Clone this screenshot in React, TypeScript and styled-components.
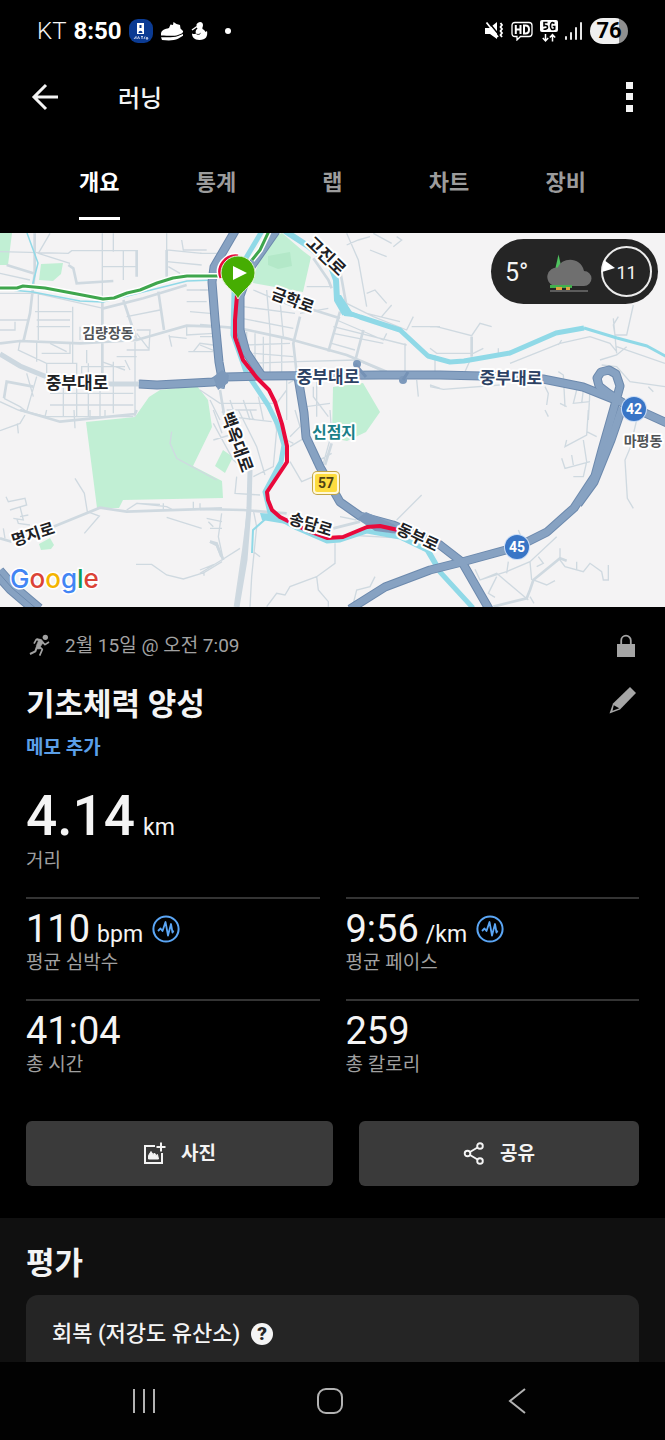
import React from "react";
import styled, { createGlobalStyle } from "styled-components";

const GlobalStyle = createGlobalStyle`
  * { box-sizing: border-box; }
  body {
    margin: 0;
    background: #000;
    color: #f4f4f4;
    font-family: Roboto, "Noto Sans CJK KR", sans-serif;
  }
  button {
    margin: 0;
    padding: 0;
    border: 0;
    background: none;
    color: inherit;
    font: inherit;
    cursor: pointer;
  }
  svg { display: block; flex: none; }
`;

const Screen = styled.div`
  display: flex;
  flex-direction: column;
  min-height: 100vh;
`;

/* ---------- Status bar ---------- */

const StatusBar = styled.div`
  display: flex;
  align-items: center;
  justify-content: space-between;
  height: 62px;
  padding: 0 37px;
`;

const StatusGroup = styled.div<{ $gap: number }>`
  display: flex;
  align-items: center;
  gap: ${(p) => p.$gap}px;
`;

const Carrier = styled.span`
  font-size: 24px;
  line-height: 30px;
  font-weight: 300;
`;

const Clock = styled.time`
  font-size: 24px;
  line-height: 30px;
  font-weight: 700;
  color: #fff;
`;

const Battery = styled.span`
  display: flex;
  align-items: center;
  justify-content: center;
  width: 38px;
  height: 26px;
  border-radius: 13px;
  background: linear-gradient(90deg, #efefef 76%, #8f8f8f 76%);
  color: #000;
  font-size: 22px;
  line-height: 26px;
  font-weight: 700;
`;

/* ---------- App bar and tabs ---------- */

const AppBar = styled.header`
  display: flex;
  align-items: center;
  height: 70px;
  padding: 0 19px 0 28px;
`;

const IconButton = styled.button`
  display: flex;
  align-items: center;
  justify-content: center;
  width: 34px;
  height: 40px;
`;

const AppTitle = styled.h1`
  flex: 1;
  margin: 0 0 0 56px;
  padding-top: 3px;
  font-size: 24px;
  line-height: 36px;
  font-weight: 500;
`;

const Tabs = styled.div`
  display: flex;
  height: 101px;
  padding: 0 41px;
`;

const Tab = styled.button<{ $active?: boolean }>`
  flex: 1;
  display: flex;
  justify-content: center;
  padding-top: 35px;
  font-size: 22px;
  font-weight: 700;
  color: ${(p) => (p.$active ? "#ffffff" : "#9c9c9c")};

  span {
    height: 53px;
    line-height: 32px;
    border-bottom: 3px solid ${(p) => (p.$active ? "#ffffff" : "transparent")};
  }
`;

/* ---------- Map ---------- */

const MapPanel = styled.section`
  position: relative;
  height: 374px;
  background: #f4f3f4;
`;

const MapCanvas = styled.svg`
  width: 100%;
  height: 100%;
  font-family: Roboto, "Noto Sans CJK KR", sans-serif;
`;

const Weather = styled.div`
  position: absolute;
  top: 6px;
  right: 7px;
  display: flex;
  align-items: center;
  width: 167px;
  height: 65px;
  padding: 0 6px 0 14px;
  border-radius: 33px;
  background: #252525;
`;

const Temperature = styled.span`
  flex: 1;
  padding-top: 3px;
  font-size: 25px;
  line-height: 32px;
`;

const Wind = styled.span`
  position: relative;
  display: flex;
  align-items: center;
  justify-content: center;
  width: 51px;
  height: 51px;
  margin-left: 9px;
  padding-top: 2px;
  border: 2px solid #ececec;
  border-radius: 50%;
  font-size: 18px;
  line-height: 24px;

  svg { position: absolute; left: -1px; top: 11px; }
`;

/* ---------- Activity summary ---------- */

const Summary = styled.main`
  padding: 24px 26px 32px;
`;

const MetaRow = styled.div`
  display: flex;
  align-items: center;
  height: 30px;
  padding-right: 2px;
  color: #a2a2a2;
`;

const MetaText = styled.span`
  flex: 1;
  margin-left: 14px;
  font-size: 19px;
  line-height: 32px;
`;

const TitleRow = styled.div`
  display: flex;
  align-items: flex-start;
  justify-content: space-between;
  height: 48px;
  margin-top: 20px;
`;

const EditButton = styled.button`
  padding: 5px 2px 0 0;
`;

const Heading = styled.h2`
  margin: 0;
  font-size: 31px;
  line-height: 48px;
  font-weight: 700;
`;

const NoteLink = styled.a`
  display: block;
  width: max-content;
  height: 26px;
  margin-top: 6px;
  font-size: 19px;
  line-height: 26px;
  font-weight: 700;
  color: #5b9fe8;
  text-decoration: none;
`;

const Distance = styled.div`
  margin-top: 24px;
`;

const DistanceValue = styled.div`
  height: 64px;
  font-size: 55px;
  line-height: 62px;
  font-weight: 500;
`;

const Unit = styled.span<{ $gap: number }>`
  margin-left: ${(p) => p.$gap}px;
  font-size: 23px;
  line-height: 24px;
  font-weight: 400;
`;

const StatLabel = styled.div`
  height: 24px;
  font-size: 19px;
  line-height: 24px;
  color: #a0a0a0;
`;

const Stats = styled.div`
  display: grid;
  grid-template-columns: 1fr 1fr;
  gap: 24px 26px;
  margin-top: 24px;
`;

const Stat = styled.div`
  padding-top: 8px;
  border-top: 2px solid #343434;
`;

const StatValue = styled.div`
  display: flex;
  align-items: center;
  gap: 9px;
  height: 44px;
`;

const Figure = styled.span`
  display: flex;
  align-items: baseline;
  font-size: 38px;
  line-height: 44px;
`;

const Actions = styled.div`
  display: flex;
  gap: 26px;
  margin-top: 44px;
`;

const ActionButton = styled.button<{ $grow: number }>`
  flex: ${(p) => p.$grow} 1 0;
  display: flex;
  align-items: center;
  justify-content: center;
  gap: 15px;
  height: 65px;
  border-radius: 6px;
  background: #3a3a3a;
  font-size: 19px;
  line-height: 26px;
  font-weight: 700;
`;

/* ---------- Evaluation ---------- */

const Evaluation = styled.section`
  flex: 1;
  display: flex;
  flex-direction: column;
  padding: 22px 26px 0;
  background: #101010;
`;

const EvaluationCard = styled.div`
  flex: 1;
  margin-top: 7px;
  padding: 24px 26px 13px;
  border-radius: 12px 12px 0 0;
  background: #252525;
`;

const EvaluationRow = styled.div`
  display: flex;
  align-items: center;
  gap: 11px;
  height: 30px;
  font-size: 22px;
  line-height: 32px;
  font-weight: 500;
`;

const HelpButton = styled.button`
  width: 22px;
  height: 22px;
  border-radius: 50%;
  background: #f4f4f4;
  color: #252525;
  font-size: 19px;
  line-height: 22px;
  font-weight: 900;
`;

const SystemNav = styled.nav`
  position: sticky;
  bottom: 0;
  display: flex;
  height: 78px;
  padding: 0 55px 0 51px;
  background: #020202;

  button {
    flex: 1;
    display: flex;
    align-items: center;
    justify-content: center;
  }
`;

/* ---------- Icons ---------- */

const PulseIcon = () => (
  <svg width="28" height="28" viewBox="0 0 28 28" fill="none" stroke="#5ba6f5" strokeLinejoin="round">
    <circle cx="14" cy="14" r="12.6" strokeWidth="2" />
    <path d="M6 16l2.500-2.500 2 2.500 3-9 2.500 13.500 3-11.500 1.500 8.500 1-2" strokeWidth="1.800" />
  </svg>
);

const RunnerIcon = () => (
  <svg width="25" height="24" viewBox="78 72 75 72" fill="none" stroke="#a2a2a2" strokeLinejoin="round">
    <circle cx="136" cy="82" r="8" fill="#a2a2a2" stroke="none" />
    <path d="M111 86l14 3 5 8-9 13 2 6-11 1-3-10 6-14z" fill="#a2a2a2" strokeWidth="2" />
    <path d="M122 90l-13-2-7 13M126 95l9 9 12-8M118 110l9 8-8 19" strokeWidth="5" />
    <path d="M111 110l-5 14-16 8" strokeWidth="6" />
  </svg>
);

const LockIcon = () => (
  <svg width="22" height="24" viewBox="0 0 22 24">
    <path d="M2 10h18v13H2z" fill="#a5a5a5" />
    <path d="M6.200 11V6.500a4.800 4.800 0 0 1 9.600 0V11" fill="none" stroke="#a5a5a5" strokeWidth="1.800" />
  </svg>
);

const PencilIcon = () => (
  <svg width="28" height="28" viewBox="0 0 28 28">
    <path d="M21 1l6 6L11 23.500 0.500 27.500 4 17.500z" fill="#a5a5a5" />
    <path d="M4.800 19.200l5.500 3-6.800 2.500z" fill="#000" />
  </svg>
);

const PhotoIcon = () => (
  <svg width="23" height="23" viewBox="0 0 23 23" fill="none" stroke="#f4f4f4" strokeWidth="2">
    <path d="M12 4H2v17h17V11M18 0.500v9M13.500 5h9" />
    <path d="M5.500 17v-3.500l2.500-4 2 3 1.500-1.500 1.500 2.500 1.500-1 1 4.500z" fill="#f4f4f4" strokeWidth="1" />
  </svg>
);

const ShareIcon = () => (
  <svg width="22" height="23" viewBox="0 0 22 23" fill="none" stroke="#f4f4f4" strokeWidth="1.900">
    <circle cx="4.500" cy="11.500" r="2.800" />
    <circle cx="17" cy="4" r="2.800" />
    <circle cx="17" cy="19" r="2.800" />
    <path d="M7 10l7.500-4.500M7 13l7.500 4.500" />
  </svg>
);

const BusAppIcon = () => (
  <svg width="24" height="24" viewBox="0 0 24 24">
    <rect width="24" height="24" rx="9" fill="#0b3b93" />
    <path d="M8 4h7v11H8z" fill="#fff" />
    <path d="M10.500 6h2v3h-2zM9.500 14c0-3 4-3 4 0z" fill="#0b3b93" />
    <path d="M5 20l2-2.500v2.500M8.500 20l1-2.500 1 2.500M12 17.500h2M13 17.500V20M15 20l1-2.500M17 20l1-2 1 2z" stroke="#cfd9ef" strokeWidth="0.900" fill="none" />
  </svg>
);

const ShoeIcon = () => (
  <svg width="24" height="20" viewBox="0 0 24 20" fill="#fff">
    <path d="M1 12.500C1.500 9 5 8 9 7L10.500 3.500 13 4l.5-3 3 2 3.500 1 .5 3.500L23 10c.5 2-2 3-5 4-4 1.300-9 .8-17 .5z" />
    <path d="M1 16.200c7 .3 13 .3 17-1.200l5-2v1.800l-5 3c-4 2-10 2-16 1.200z" />
  </svg>
);

const DuckIcon = () => (
  <svg width="17" height="20" viewBox="0 0 17 20" fill="#fff">
    <path d="M5.500 3.500C7 0 12 0 12 4c0 2-1 2.500-.5 4 2 1 2.500 2 3 3l1.500-1c1 5-1 9-7.500 9C3 19 1 16 1 12.500c1.500.5 2.500 1 4 0-1-2 0-4 1.500-5C5.500 6.500 5.500 5 5.500 3.500z" />
    <path d="M1 9L6 5.500" stroke="#fff" strokeWidth="1.500" />
    <path d="M5.500 13c1.500.8 3 .5 4-.7" fill="none" stroke="#000" strokeWidth="0.900" />
  </svg>
);

const MuteIcon = () => (
  <svg width="20" height="20" viewBox="0 0 20 20">
    <path d="M1 7h4.500L13 1v17L6 13H1z" fill="#fff" />
    <path d="M4 0.500L16 15" stroke="#000" strokeWidth="1.500" />
    <path d="M2.500 1.500L14 16M16.500 2l1.500 2-1.500 2 1.500 2-1.500 2 1.500 2-1.500 2 1.500 2" stroke="#fff" strokeWidth="1.800" fill="none" />
  </svg>
);

const HdIcon = () => (
  <svg width="22" height="20" viewBox="0 0 22 20" fill="none" stroke="#fff" strokeWidth="1.300">
    <path d="M4 1.500h14q3 0 3 3v8q0 3-3 3H9.500L6 19v-3.500H4q-3 0-3-3v-8q0-3 3-3z" />
    <path d="M4.800 4v9M9.500 4v9M4.800 8.500h4.700M13 4.500v8h1.500q3.500 0 3.500-4T14.500 4.500z" strokeWidth="2" />
  </svg>
);

const FiveGIcon = () => (
  <svg width="18" height="23" viewBox="0 0 18 23">
    <rect width="18" height="12" rx="2" fill="#fff" />
    <path d="M7.500 2.500H4v3.200q3.500-.7 3.500 1.500T3.500 9.200M14.500 3.500Q10.500 1 10.500 6t4.200 3V6.500h-2" fill="none" stroke="#000" strokeWidth="1.600" />
    <path d="M5.500 14v6.500M2.800 18l2.700 3 2.700-3M12.500 21.500V15M9.800 17.500l2.700-3 2.700 3" fill="none" stroke="#fff" strokeWidth="1.500" />
  </svg>
);

const SignalIcon = () => (
  <svg width="18" height="19" viewBox="0 0 18 19" fill="#e6e6e6">
    <rect x="0" y="14" width="2" height="4" rx="1" />
    <rect x="5" y="10" width="2" height="8" rx="1" />
    <rect x="10" y="5" width="2" height="13" rx="1" />
    <rect x="15" y="0" width="2" height="18" rx="1" />
  </svg>
);

const WeatherIcon = () => (
  <svg width="46" height="40" viewBox="0 0 46 40">
    <path d="M9 18L12.500 2.500 16 18z" fill="#4fc35f" />
    <path d="M8 34a9.500 9.500 0 0 1 4-18.500C15 5 35 4 38 19a7.500 7.500 0 0 1 0 15z" fill="#6f6f6f" />
    <path d="M4 33h22v3H4z" fill="#43b04e" />
    <path d="M10 35h6v3h-6zM20 35h4v3h-4z" fill="#e0a441" />
    <path d="M4 39h38" stroke="#6f6f6f" strokeWidth="1.500" />
  </svg>
);

/* ---------- Map drawing ---------- */

type Place = { text: string; x: number; y: number; size: number; angle?: number; color?: string };

const PLACES: Place[] = [
  { text: "고진로", x: 326, y: 256, size: 17, angle: 44 },
  { text: "금학로", x: 293, y: 300, size: 16, angle: 20 },
  { text: "중부대로", x: 328, y: 377, size: 17, color: "#2c4163" },
  { text: "중부대로", x: 511, y: 378, size: 17, color: "#2c4163", angle: 1 },
  { text: "중부대로", x: 77, y: 383, size: 17 },
  { text: "김량장동", x: 108, y: 332, size: 14, color: "#505356" },
  { text: "백옥대로", x: 237, y: 442, size: 17, angle: 70 },
  { text: "신점지", x: 334, y: 432, size: 16, color: "#1a7f88" },
  { text: "명지로", x: 33, y: 534, size: 16, angle: -18 },
  { text: "송담로", x: 311, y: 524, size: 16, angle: 17 },
  { text: "동부로", x: 418, y: 537, size: 16, angle: 25 },
  { text: "마평동", x: 643, y: 440, size: 14, color: "#505356" },
];

/* Side streets, one block of paths per map tile, at three units to the pixel. */
const STREETS: { x: number; y: number; thin: string; wide: string }[] = [
  {
    x: 0,
    y: 230,
    wide: "M104 10V130L90 250 70 335M20 105L100 130M205 105L220 115 230 160 340 153M307 215V430M410 60V140M500 60V140M0 340L60 333 240 340 410 330 560 287 650 290M370 210L410 330M475 185L492 300M310 235L430 205 560 165M12 505L20 455 100 470",
    thin: "M0 65L205 70 215 62H410M0 130L90 150M150 10L115 70 210 100M307 10V200M370 60V150M340 10V65M307 110H410M500 10V60L605 70M500 95L605 105M505 110L540 130M545 30L550 60H620M0 190L110 190 310 235M115 190V330M105 245H215M110 270H210M0 270H85M0 300H45V275M110 290H210M218 230V400M240 290V330M380 260L480 240M410 300H450L447 360H380M410 310L445 355M507 315L515 350M510 320L560 325M560 285V315L640 310M565 365H640M580 365L600 340 640 345M60 335L55 360 140 400V430M110 335V395M150 340L200 365M125 370H210V340M140 400H230V560M305 395L375 420M340 395V550M375 390L390 420M245 430V410H375M80 430L100 500M12 505L60 530 80 545 110 440M0 515L55 540 140 560H400M150 490H400M150 525H400M190 430V560M265 400V560M300 430V560M405 335V560M560 180H620M560 215H620M570 245L630 250M350 380H410M415 450L430 470M260 360V400",
  },
  {
    x: 200,
    y: 230,
    wide: "M0 285L120 295 260 325 440 375 560 425M300 260L280 340 290 430M420 245L385 365M340 85L385 150 395 175M420 120L440 230M310 230L420 265M60 480L75 570M480 425L470 390M490 300L465 395",
    thin: "M440 10L475 90 500 230M440 45L475 30 510 20M520 10L575 40M580 50L605 30 590 20M510 60L560 80M500 190L525 180 560 220M545 260L575 225M440 220L520 260 620 300 640 260M500 250L600 275M615 340V425M410 270L550 330 560 310M400 290L620 345M400 310L550 340M395 340L465 360M635 290H720M320 170H395M300 250L385 235M160 180L290 235M130 230L285 250M125 265L280 295M120 320L150 385 190 435M0 320H50M0 345L50 365M0 180H40M0 70H60M140 305V400M165 310V420M190 320V420M210 300V430M245 320V430M140 345L270 340M160 370L280 380M150 400L290 395M290 395L470 390 550 425M200 180L210 300M240 210L250 320M0 480L60 520H230M30 510L60 570M90 510L110 570M130 510L150 570M80 540H170M175 500L190 570M260 480L230 520M340 470V500L385 560M320 530L390 520M265 460L300 440M650 450L655 500M690 465L720 475M350 440V560M260 440V570",
  },
  {
    x: 430,
    y: 230,
    wide: "M125 320V380",
    thin: "M0 290H20L125 317 150 280 185 290M0 355L20 370H130L160 355M15 375V425M125 380L105 425M205 355V370M240 400L390 340 480 320 540 340 560 365M550 265L560 370M555 315H590L610 225M565 260L550 285 555 315M560 350L705 400M510 390L560 375 590 350M515 405L560 410 600 455 705 470M385 345L395 330M0 470L40 478 210 465M345 470L355 490 350 525M385 425L400 435 405 530M390 520L410 530M440 480L430 520 480 515M460 480L455 520M480 480L475 570M655 470L670 485",
  },
  {
    x: 0,
    y: 410,
    wide: "M160 350L300 293 380 305 666 295M0 385L35 395M60 0L180 35 405 12 410 0M630 395L650 400 664 440",
    thin: "M0 62L60 40 75 15M52 40L55 70M135 20L140 0M222 0L225 55M270 25V0M315 20V0M225 205L253 250 262 305M262 305L298 318 253 370M18 260L25 275 75 265 80 285 30 300M60 290L70 330 40 325M60 320L85 315M50 325L55 340 90 345M10 355L15 385M380 300L410 280 500 290 520 300M490 280V300M410 280L480 283M580 275V300M600 280V295M500 322L605 355M408 463H455L500 495 550 507 612 488 666 455M612 485V497M620 325L666 335M630 355H666M515 65L510 100 530 145 650 210M640 0L666 70",
  },
  {
    x: 200,
    y: 410,
    wide: "M0 297L130 300 260 310M150 190L145 300 130 420 105 590M30 395L50 405 70 450M400 355L480 335M375 165L395 100",
    thin: "M40 40L100 150 135 180M65 5L90 20 215 35M115 0L170 110 195 195M150 0L160 30M220 20L230 60 220 170 160 200M110 200L105 250 180 255M40 90L90 75M0 490L65 450 120 415M65 310L55 380 70 450M25 335L40 350M0 480L50 460M160 300L170 350 155 500 150 590M160 425L180 440M405 400V460L350 500 270 530 255 555 230 550 200 590M350 500L355 540 385 575V590M460 580L470 540 510 530 525 500M590 330L665 255M270 155L305 215 340 200M270 110L320 80M260 90L280 100M285 0L300 50 270 80M370 160L395 70 390 0M200 310L210 290M340 160L395 130M420 320L470 330M440 375L620 385 670 420",
  },
  {
    x: 430,
    y: 410,
    wide: "M300 540L310 510 390 445 410 452M190 590L290 565 300 540",
    thin: "M135 478L150 510 230 485 300 455 380 380M150 510L200 490 295 570M200 500L175 550 195 562M235 455L230 490M265 360L275 385M300 455L305 510M325 440L340 460 320 470M310 510L350 525 375 512M390 415V450L405 470 460 485 480 460 515 485 520 510H535V465M300 560L312 580M475 0L470 75 405 110 410 90M470 65L500 80M460 90L470 155 460 200 430 200M395 145L405 175 480 155M425 135L430 165M620 30L600 115 585 150 592 265 610 295M345 0L355 20M440 455V480",
  },
];

const TRUNKS = [
  "M235 231L214 267 212 282 215 320 219 362 222 379 220 388",
  "M276 231L250 268 240 296 240 330 246 352 262 376",
  "M139 384L157 385 213 382 225 377 262 376 380 375 440 375 482 376 543 379 583 387 623 403 667 423",
  "M623 403L608 393 599 386 597 378 601 372 609 370 616 374 620 386 614 408 602 450 595 476 574 508 547 532 517 547 462 562 430 570 385 587 350 609",
  "M622 408L611 440 594 482 578 504",
  "M298 377L304 413 306 437 320 467 340 502 360 516 393 525 440 545 462 562 489 609",
];

const TRANSIT =
  "M-2 288H17L23 286 45 288 77 294 103 299 114 298 127 293 140 290 157 283 173 278 187 276H222M252 260L260 250 269 231";

const MapDrawing = () => (
  <MapCanvas viewBox="0 233 665 374" preserveAspectRatio="xMidYMid slice" role="img" aria-label="러닝 경로 지도">
    <rect x="-700" y="233" width="2100" height="374" fill="#f4f3f4" />
    <g fill="#c1efd4">
      <path d="M86 422L135 417 149 397 160 390 197 386 208 400 212 427 193 466 222 481 223 498 123 500 119 508 97 508z" />
      <path d="M0 233H12L8 265H0zM41 264L63 263 61 274 53 281 39 280zM268 240L282 233 303 251 311 257 303 292 253 283 255 272z" />
      <path d="M333 387L363 383 380 412 366 432 347 441 332 438zM215 466L223 450 233 457 225 473zM39 544L50 538 54 545 51 549 41 550z" />
    </g>
    <path d="M268 256L290 252 292 266 278 269 268 265z" fill="#b3e8c8" />

    {STREETS.map((tile) => (
      <g key={`${tile.x}-${tile.y}`} transform={`translate(${tile.x} ${tile.y}) scale(.33333)`} fill="none" stroke="#cfd9e0">
        <path d={tile.thin} strokeWidth="4" />
        <path d={tile.wide} strokeWidth="8" />
      </g>
    ))}
    <g fill="none" stroke="#cdd8e0" strokeWidth="5">
      <path d="M0 354L20 366 47 377M105 384H140M237 607L245 560 249 508 250 470" />
    </g>

    <g fill="none" stroke="#90d9e7" strokeLinejoin="round">
      <path d="M27 233L38 263 32 287M0 289L33 292 80 301 103 302 187 281 215 280" strokeWidth="1.500" />
      <path d="M262 231L246 258 234 292 233 335 246 372 268 405 278 425 284 445 281 462 265 492 270 513 297 528 327 541 340 540 367 531 400 537 427 550 440 572 473 608" strokeWidth="5" />
      <path d="M270 515L253 530 252 553" strokeWidth="2" />
      <path d="M285 231L308 246 330 264 336 280 337 300 345 314" strokeWidth="6" />
      <path d="M343 311L360 317 400 330 428 356 450 362 464 361 510 353 556 333 584 328" strokeWidth="5" />
      <path d="M584 328L617 338 647 346 667 357" strokeWidth="3" />
    </g>
    <path d="M334 295L341 295 352 312 372 319 344 316zM260 513L276 514 286 524 262 520zM424 548L432 552 440 566 434 563z" fill="#90d9e7" />

    <g fill="none" strokeLinejoin="round">
      {TRUNKS.map((d) => (
        <path key={d} d={d} stroke="#6c89ad" strokeWidth="9" />
      ))}
      <path d="M-2 572L12 588 38 610" stroke="#6c89ad" strokeWidth="14" />
      {TRUNKS.map((d) => (
        <path key={d} d={d} stroke="#87a2c2" strokeWidth="7" />
      ))}
      <path d="M-2 572L12 588 38 610" stroke="#87a2c2" strokeWidth="12" />
      <path d="M-2 572L12 588 38 610" stroke="#6c89ad" strokeWidth="1" />
    </g>
    <g fill="#7d99bb">
      <path d="M357 519L366 512 395 525 398 534 375 531zM213 377L222 370 229 375 228 383 218 390z" />
      <circle cx="357" cy="364" r="4" />
      <circle cx="403" cy="380" r="4" />
      <path d="M355 364L366 377M403 380L408 372" stroke="#7592b6" strokeWidth="3" />
    </g>

    <g fill="none" strokeLinejoin="round">
      <path d={TRANSIT} stroke="#fff" strokeWidth="6" />
      <path d={TRANSIT} stroke="#3fa64d" strokeWidth="3" />
      <path d="M237 295L235 320 235 337 243 360 257 378 269 390 275 402 282 424 287 446 287 462 267 492 268 500 272 510 280 517 306 530 327 538 343 537 367 527 380 526 398 530" stroke="#e9093b" strokeWidth="4" />
    </g>

    <path d="M221 278a16 16 0 0 1 17-22" fill="none" stroke="#fff" strokeWidth="6" />
    <path d="M221 278a16 16 0 0 1 17-22" fill="none" stroke="#e9093b" strokeWidth="3" />
    <path d="M238 299c-3-8-17-14-17-26a17 17 0 0 1 34 0c0 12-14 18-17 26z" fill="#46ad02" stroke="#dff0d5" strokeWidth="1" />
    <path d="M233 266L247 273 233 280z" fill="#fff" />

    <g fontWeight="700" textAnchor="middle" stroke="#fff" strokeWidth="4" strokeLinejoin="round" paintOrder="stroke">
      {PLACES.map((p) => (
        <text
          key={`${p.text}-${p.x}`}
          x={p.x}
          y={p.y}
          dy={6}
          fontSize={p.size}
          fill={p.color ?? "#202124"}
          transform={`rotate(${p.angle ?? 0} ${p.x} ${p.y})`}
        >
          {p.text}
        </text>
      ))}
    </g>

    <rect x="312" y="471" width="28" height="24" rx="5" fill="#c2a545" />
    <rect x="313" y="472" width="26" height="22" rx="4" fill="#fff8d8" />
    <rect x="315" y="474" width="22" height="18" rx="2" fill="#fddc3f" />
    <circle cx="634" cy="409" r="13" fill="#c9dcf6" />
    <circle cx="634" cy="409" r="12" fill="#3875c6" />
    <circle cx="517" cy="547" r="13" fill="#c9dcf6" />
    <circle cx="517" cy="547" r="12" fill="#3875c6" />
    <g fontSize="14" fontWeight="700" textAnchor="middle">
      <text x="326" y="488" fill="#4d4115">57</text>
      <text x="634" y="414" fill="#fff">42</text>
      <text x="517" y="552" fill="#fff">45</text>
    </g>

    <text
      x="10"
      y="588"
      fontFamily="Inter, sans-serif"
      fontSize="26"
      fontWeight="500"
      stroke="#fff"
      strokeWidth="3"
      paintOrder="stroke"
    >
      <tspan fill="#4285f4">G</tspan>
      <tspan fill="#db4437">o</tspan>
      <tspan fill="#f4b400">o</tspan>
      <tspan fill="#4285f4">g</tspan>
      <tspan fill="#0f9d58">l</tspan>
      <tspan fill="#db4437">e</tspan>
    </text>
  </MapCanvas>
);

const TABS = ["개요", "통계", "랩", "차트", "장비"];

const STATS = [
  { value: "110", unit: "bpm", label: "평균 심박수", pulse: true },
  { value: "9:56", unit: "/km", label: "평균 페이스", pulse: true },
  { value: "41:04", label: "총 시간" },
  { value: "259", label: "총 칼로리" },
];

export default function App() {
  return (
    <Screen>
      <GlobalStyle />
      <StatusBar>
        <StatusGroup $gap={7}>
          <Carrier>KT</Carrier>
          <Clock>8:50</Clock>
          <BusAppIcon />
          <StatusGroup $gap={7}>
            <ShoeIcon />
            <DuckIcon />
          </StatusGroup>
          <svg width="24" height="8" viewBox="0 0 24 8">
            <circle cx="13" cy="4" r="3" fill="#fff" />
          </svg>
        </StatusGroup>
        <StatusGroup $gap={7}>
          <MuteIcon />
          <HdIcon />
          <FiveGIcon />
          <SignalIcon />
          <Battery>76</Battery>
        </StatusGroup>
      </StatusBar>

      <AppBar>
        <IconButton aria-label="뒤로">
          <svg width="28" height="28" viewBox="0 0 28 28" fill="none" stroke="#f4f4f4" strokeWidth="3">
            <path d="M27 14H4M15 2L3 14l12 12" />
          </svg>
        </IconButton>
        <AppTitle>러닝</AppTitle>
        <IconButton aria-label="더보기">
          <svg width="8" height="30" viewBox="0 0 8 30" fill="#f4f4f4">
            <path d="M1 0h7v7H1zM1 11h7v7H1zM1 23h7v7H1z" />
          </svg>
        </IconButton>
      </AppBar>

      <Tabs role="tablist">
        {TABS.map((name, i) => (
          <Tab key={name} role="tab" aria-selected={i === 0} $active={i === 0}>
            <span>{name}</span>
          </Tab>
        ))}
      </Tabs>

      <MapPanel>
        <MapDrawing />
        <Weather>
          <Temperature>5°</Temperature>
          <WeatherIcon />
          <Wind>
            11
            <svg width="13" height="14" viewBox="0 0 13 14" fill="#fff">
              <path d="M2 1L13 9 0 13z" />
            </svg>
          </Wind>
        </Weather>
      </MapPanel>

      <Summary>
        <MetaRow>
          <RunnerIcon />
          <MetaText>2월 15일 @ 오전 7:09</MetaText>
          <LockIcon />
        </MetaRow>
        <TitleRow>
          <Heading>기초체력 양성</Heading>
          <EditButton aria-label="이름 편집">
            <PencilIcon />
          </EditButton>
        </TitleRow>
        <NoteLink href="#note">메모 추가</NoteLink>

        <Distance>
          <DistanceValue>
            4.14<Unit $gap={8}>km</Unit>
          </DistanceValue>
          <StatLabel>거리</StatLabel>
        </Distance>

        <Stats>
          {STATS.map((s) => (
            <Stat key={s.label}>
              <StatValue>
                <Figure>
                  {s.value}
                  {s.unit && <Unit $gap={7}>{s.unit}</Unit>}
                </Figure>
                {s.pulse && <PulseIcon />}
              </StatValue>
              <StatLabel>{s.label}</StatLabel>
            </Stat>
          ))}
        </Stats>

        <Actions>
          <ActionButton $grow={307}>
            <PhotoIcon />
            사진
          </ActionButton>
          <ActionButton $grow={280}>
            <ShareIcon />
            공유
          </ActionButton>
        </Actions>
      </Summary>

      <Evaluation>
        <Heading>평가</Heading>
        <EvaluationCard>
          <EvaluationRow>
            회복 (저강도 유산소)
            <HelpButton aria-label="도움말">?</HelpButton>
          </EvaluationRow>
        </EvaluationCard>
      </Evaluation>

      <SystemNav>
        <button aria-label="최근 앱">
          <svg width="24" height="26" viewBox="0 0 24 26" stroke="#b2b2b2" strokeWidth="2">
            <path d="M2 1v24M12 1v24M22 1v24" />
          </svg>
        </button>
        <button aria-label="홈">
          <svg width="28" height="28" viewBox="0 0 28 28" fill="none" stroke="#b2b2b2" strokeWidth="2">
            <rect x="2" y="2" width="24" height="24" rx="8" />
          </svg>
        </button>
        <button aria-label="뒤로 가기">
          <svg width="18" height="28" viewBox="0 0 18 28" fill="none" stroke="#b2b2b2" strokeWidth="2">
            <path d="M17 2L2 14l15 12" />
          </svg>
        </button>
      </SystemNav>
    </Screen>
  );
}
